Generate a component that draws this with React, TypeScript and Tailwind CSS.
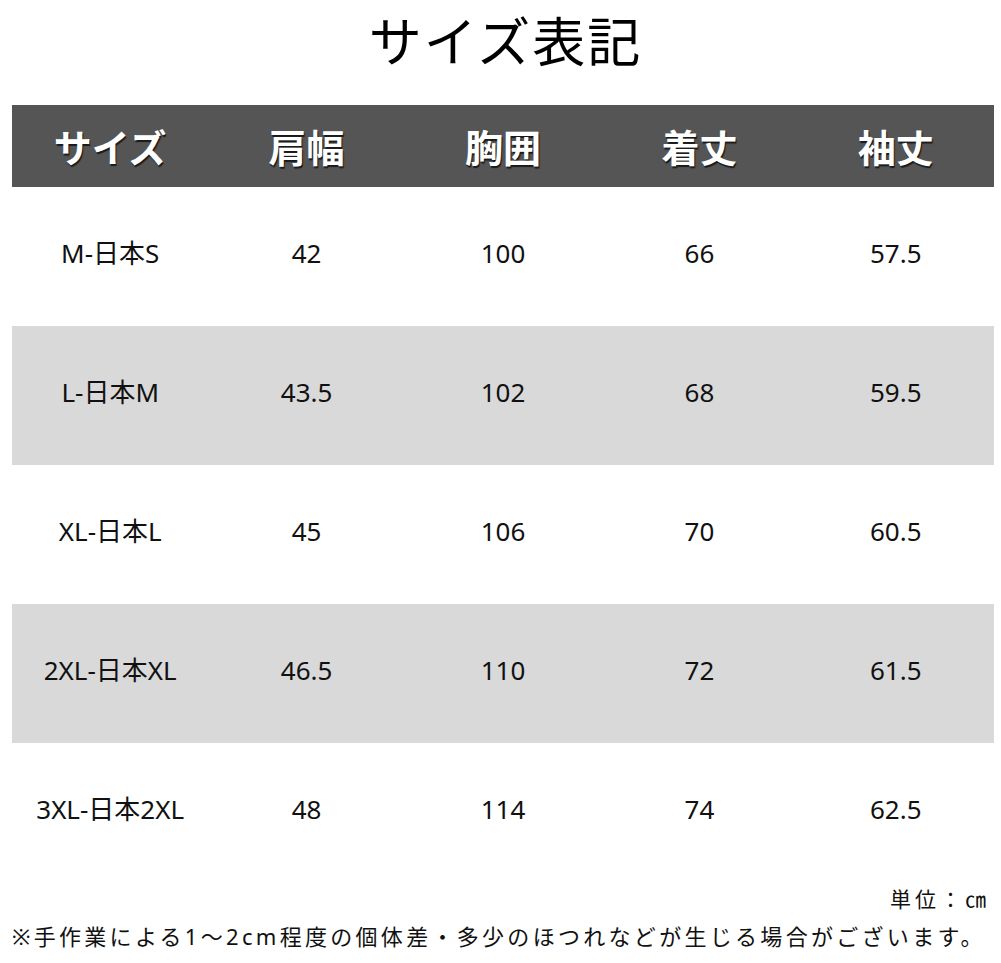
const headers = ["サイズ", "肩幅", "胸囲", "着丈", "袖丈"];

const rows = [
  ["M-日本S", "42", "100", "66", "57.5"],
  ["L-日本M", "43.5", "102", "68", "59.5"],
  ["XL-日本L", "45", "106", "70", "60.5"],
  ["2XL-日本XL", "46.5", "110", "72", "61.5"],
  ["3XL-日本2XL", "48", "114", "74", "62.5"],
];

const font = "font-['Noto_Sans','Noto_Sans_CJK_JP',sans-serif]";

export default function App() {
  return (
    <div className={`w-[1001px] h-[963px] bg-white text-black ${font}`}>
      <div className="h-[105px] flex items-center justify-center pb-[26px] pl-[10px]">
        <h1 className="text-[53px] leading-none font-normal tracking-[2px] font-['Noto_Sans_CJK_JP',sans-serif]">
          サイズ表記
        </h1>
      </div>

      <div className="pl-[12px] pr-[7px]">
        <div className="h-[82px] bg-[#555555] grid grid-cols-5 items-center">
          {headers.map((h) => (
            <div
              key={h}
              className="text-center text-white text-[38px] font-bold font-['Noto_Sans_CJK_JP',sans-serif] [text-shadow:1px_2px_1px_rgba(0,0,0,0.7)] pb-[2px]"
            >
              {h}
            </div>
          ))}
        </div>

        {rows.map((r, i) => (
          <div
            key={r[0]}
            className={`h-[139px] grid grid-cols-5 items-center ${
              i % 2 === 1 ? "bg-[#d9d9d9]" : "bg-white"
            }`}
          >
            {r.map((c, j) => (
              <div key={j} className="text-center text-[26px] text-[#111] pb-[6px]">
                {c}
              </div>
            ))}
          </div>
        ))}
      </div>

      <div className="flex justify-end pr-[11px] mt-[2px]">
        <span className="text-[21px] tracking-[4px] text-[#111]">単位：㎝</span>
      </div>
      <div className="pl-[12px] mt-[4px] text-[22px] text-[#111] whitespace-nowrap tracking-[3.3px]">
        ※手作業による1～2cm程度の個体差・多少のほつれなどが生じる場合がございます。
      </div>
    </div>
  );
}
